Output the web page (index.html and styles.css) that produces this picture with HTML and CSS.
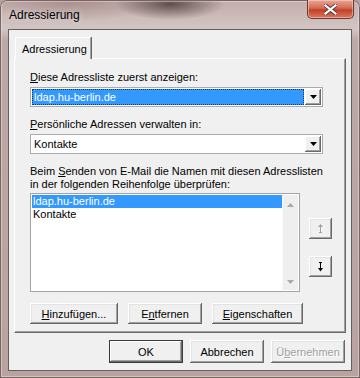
FILE: index.html
```html
<!DOCTYPE html>
<html lang="de">
<head>
    <meta charset="UTF-8">
    <title>Adressierung</title>
    <link rel="stylesheet" href="styles.css">
</head>
<body>

<div class="window">
    <div class="titlebar">
        <span class="title">Adressierung</span>
        <button class="close-btn" aria-label="Schließen">
            <svg width="13" height="11" viewBox="0 0 13 11">
                <path d="M1.5 1.5 L11.5 9.5 M11.5 1.5 L1.5 9.5" stroke="#5a3a34" stroke-width="4" stroke-linecap="square"/>
                <path d="M1.5 1.5 L11.5 9.5 M11.5 1.5 L1.5 9.5" stroke="#ffffff" stroke-width="2.2" stroke-linecap="square"/>
            </svg>
        </button>
    </div>

    <div class="client">
        <div class="tabs">
            <div class="tab active">Adressierung</div>
        </div>

        <div class="panel">
            <label class="field-label"><u>D</u>iese Adressliste zuerst anzeigen:</label>
            <div class="combo">
                <span class="combo-value selected">ldap.hu-berlin.de</span>
                <span class="combo-drop">
                    <svg width="7" height="4" viewBox="0 0 7 4"><path d="M0 0 H7 L3.5 4 Z" fill="#000"/></svg>
                </span>
            </div>

            <label class="field-label"><u>P</u>ersönliche Adressen verwalten in:</label>
            <div class="combo">
                <span class="combo-value">Kontakte</span>
                <span class="combo-drop">
                    <svg width="7" height="4" viewBox="0 0 7 4"><path d="M0 0 H7 L3.5 4 Z" fill="#000"/></svg>
                </span>
            </div>

            <p class="field-label two-line">Beim <u>S</u>enden von E-Mail die Namen mit diesen Adresslisten<br>in der folgenden Reihenfolge überprüfen:</p>

            <div class="list-row">
                <div class="listbox">
                    <div class="list-items">
                        <div class="list-item selected">ldap.hu-berlin.de</div>
                        <div class="list-item">Kontakte</div>
                    </div>
                    <div class="scrollbar">
                        <svg width="7" height="4" viewBox="0 0 7 4"><path d="M3.5 0 L7 4 H0 Z" fill="#a8a8a8"/></svg>
                        <svg width="7" height="4" viewBox="0 0 7 4"><path d="M0 0 H7 L3.5 4 Z" fill="#a8a8a8"/></svg>
                    </div>
                </div>
                <div class="order-buttons">
                    <button class="btn order-btn" disabled>
                        <svg width="6" height="10" viewBox="0 0 6 10">
                            <path d="M3 1 L6 4 H4 V9 H3 V4 Z" fill="#ffffff"/>
                            <path d="M2.5 0 L5 3 H3 V8 H4 V9 H1 V8 H2 V3 H0 Z" fill="#a0a0a0"/>
                        </svg>
                    </button>
                    <button class="btn order-btn">
                        <svg width="6" height="10" viewBox="0 0 6 10">
                            <path d="M1 0 H4 V1 H3 V6 H5 L2.5 9.5 L0 6 H2 V1 H1 Z" fill="#000"/>
                        </svg>
                    </button>
                </div>
            </div>

            <div class="button-row">
                <button class="btn btn-add"><u>H</u>inzufügen...</button>
                <button class="btn btn-remove">E<u>n</u>tfernen</button>
                <button class="btn btn-props"><u>E</u>igenschaften</button>
            </div>
        </div>

        <div class="dialog-buttons">
            <button class="btn default">OK</button>
            <button class="btn">Abbrechen</button>
            <button class="btn" disabled>Ü<u>b</u>ernehmen</button>
        </div>
    </div>
</div>

</body>
</html>
```

FILE: styles.css
```css
body {
    margin: 0;
    font-family: "Liberation Sans", Arial, sans-serif;
    font-size: 11px;
    color: #000;
    background: #b5a09e;
}
.window {
    width: 360px;
    height: 378px;
    display: flex;
    flex-direction: column;
    box-sizing: border-box;
    border-radius: 7px 7px 0 0;
    background:
        radial-gradient(ellipse 55px 16px at 170px 4px, rgba(70, 52, 52, 0.8), rgba(70, 52, 52, 0)),
        radial-gradient(ellipse 90px 22px at 70px 0, rgba(150, 120, 118, 0.6), rgba(150, 120, 118, 0)),
        linear-gradient(#c3adab, #d2c6c5 29px, #bca8a6 40px, #b9a3a1);
    box-shadow: inset 0 0 0 1px #7a6462, inset 0 0 0 2px rgba(255, 255, 255, 0.35);
}
.titlebar {
    height: 29px;
    display: flex;
    align-items: flex-start;
}
.title {
    font-size: 12px;
    line-height: 15px;
    margin: 8px 0 0 9px;
    text-shadow: 0 0 6px rgba(255, 255, 255, 0.6);
}
.close-btn {
    margin-left: auto;
    margin-right: 6px;
    width: 47px;
    height: 19px;
    padding: 0;
    display: flex;
    align-items: center;
    justify-content: center;
    border: 1px solid #6b3a34;
    border-top: none;
    border-radius: 0 0 5px 5px;
    background: linear-gradient(#e6a898, #d46a55 45%, #c23f26 55%, #d9785f);
    box-shadow: inset 0 0 0 1px rgba(255, 220, 210, 0.5);
}
.client {
    margin: 0 8px;
    height: 342px;
    box-sizing: border-box;
    border: 1px solid #6a5e5d;
    background: #f0f0f0;
    display: flex;
    flex-direction: column;
}
.tabs {
    display: flex;
    padding: 7px 0 0 6px;
}
.tab {
    position: relative;
    z-index: 1;
    width: 76px;
    height: 22px;
    box-sizing: border-box;
    margin-bottom: -1px;
    padding: 5px 0 0 6px;
    line-height: 13px;
    white-space: nowrap;
    background: #f0f0f0;
    border: 1px solid #fff;
    border-bottom: none;
    border-right-color: #a0a0a0;
    box-shadow: 1px 0 0 #696969;
}
.panel {
    margin: 0 5px;
    height: 275px;
    box-sizing: border-box;
    padding: 0 0 0 15px;
    border: 1px solid;
    border-color: #fff #696969 #696969 #fff;
    box-shadow: inset -1px -1px 0 #a0a0a0;
}
.field-label {
    display: block;
    line-height: 13px;
    margin: 12px 0 3px;
}
.two-line {
    margin: 10px 0 2px;
}
.combo {
    width: 293px;
    height: 20px;
    box-sizing: border-box;
    display: flex;
    padding: 1px;
    background: #fff;
    border: 1px solid #a8abb2;
}
.combo + .field-label {
    margin-top: 11px;
}
.combo-value {
    flex: 1;
    line-height: 14px;
    padding: 1px 2px 0;
    margin-right: 1px;
}
.combo-value.selected {
    background: #3399ff;
    color: #fff;
    outline: 1px dotted #1a3a66;
    outline-offset: -1px;
}
.combo-drop {
    width: 16px;
    display: flex;
    align-items: center;
    justify-content: center;
    background: #f0f0f0;
    box-shadow: inset -1px -1px #696969, inset 1px 1px #fff, inset -2px -2px #a0a0a0;
}
.list-row {
    display: flex;
}
.listbox {
    width: 270px;
    height: 99px;
    box-sizing: border-box;
    display: flex;
    padding: 1px;
    background: #fff;
    border: 1px solid #a0a4ab;
}
.list-items {
    flex: 1;
}
.list-item {
    height: 13px;
    line-height: 13px;
    padding-left: 1px;
}
.list-item.selected {
    background: #3399ff;
    color: #fff;
}
.scrollbar {
    width: 16px;
    display: flex;
    flex-direction: column;
    justify-content: space-between;
    align-items: center;
    padding: 8px 0 6px;
    box-sizing: border-box;
    background: #efefef;
    border-left: 1px solid #f8f8f8;
}
.order-buttons {
    display: flex;
    flex-direction: column;
    gap: 17px;
    margin: 25px 0 0 9px;
}
.btn {
    font-family: inherit;
    font-size: 11px;
    color: #000;
    height: 21px;
    padding: 0;
    border: none;
    background: #f0f0f0;
    box-shadow: inset -1px -1px #696969, inset 1px 1px #fff, inset -2px -2px #a0a0a0, inset 2px 2px #e3e3e3;
}
.btn:disabled {
    color: #a0a0a0;
    text-shadow: 1px 1px 0 #fff;
}
.order-btn {
    width: 23px;
    display: flex;
    align-items: center;
    justify-content: center;
}
.button-row {
    display: flex;
    gap: 10px;
    margin-top: 11px;
}
.btn-add {
    width: 88px;
}
.btn-remove {
    width: 74px;
}
.btn-props {
    width: 91px;
}
.dialog-buttons {
    display: flex;
    justify-content: flex-end;
    gap: 7px;
    margin: 7px 6px 0 0;
}
.dialog-buttons .btn {
    width: 74px;
    height: 23px;
}
.dialog-buttons .default {
    box-shadow: inset 0 0 0 1px #3c3c3c, inset -2px -2px #696969, inset 2px 2px #fff, inset -3px -3px #a0a0a0;
}
```
